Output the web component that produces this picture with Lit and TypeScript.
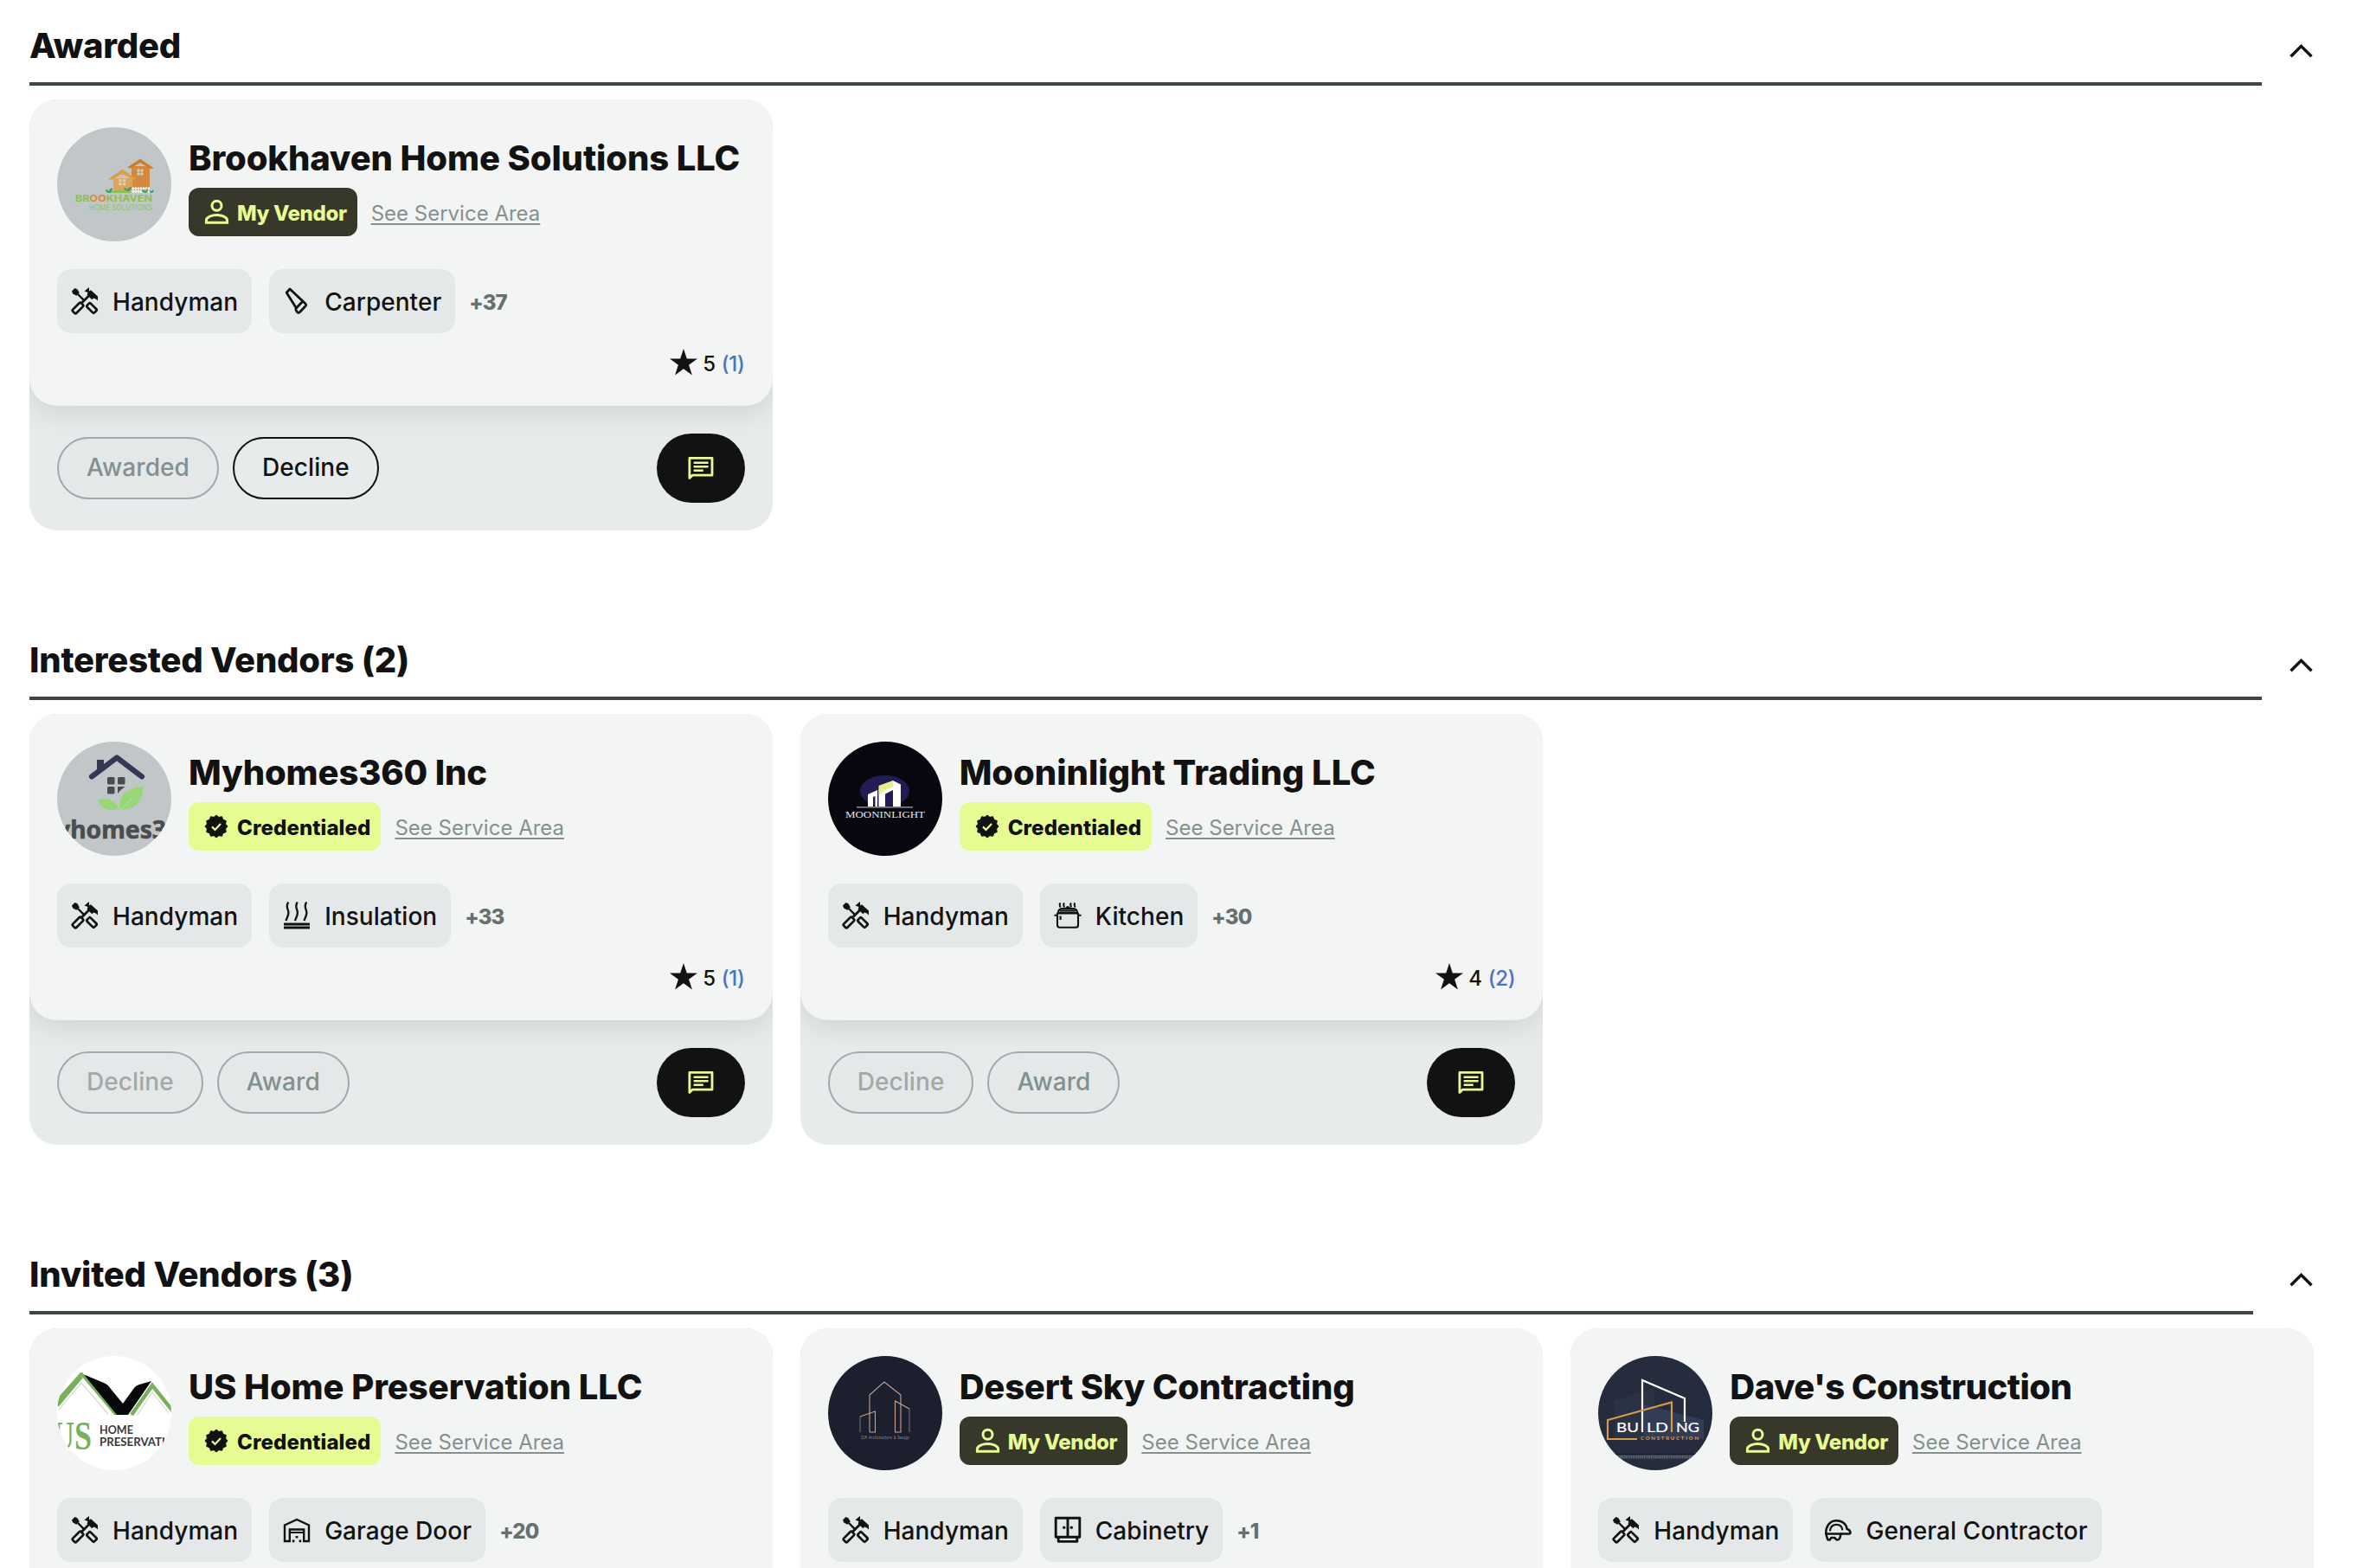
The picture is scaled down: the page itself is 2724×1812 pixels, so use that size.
import { LitElement, html, svg, css, nothing } from "lit";
import { customElement, property } from "lit/decorators.js";
import { classMap } from "lit/directives/class-map.js";
import { styleMap } from "lit/directives/style-map.js";

const icons: Record<string, unknown> = {
  handyman: svg`
    <path d="M1 4.5 4.5 1l3 1.2 2.3 4.2-3.4 3.4L2.2 7.5z" fill="currentColor"/>
    <path d="M8 8l6.6 6.6" stroke="currentColor" stroke-width="2.4"/>
    <path d="M21 9.5 12.5 18" stroke="currentColor" stroke-width="2.8"/>
    <path d="M15.5 4.6 19 1.6 21 0v4.4L23 3.2l8 7.2v5l-2.2-1.8-2.6-1.2-1.9 1.8-5.6-5.4.8-2.8z" fill="currentColor"/>
    <rect x="-6.8" y="-2.9" width="13.6" height="5.8" rx="1.6" transform="translate(8 24) rotate(-45)" fill="none" stroke="currentColor" stroke-width="2.7"/>
    <rect x="-6" y="-2.9" width="12" height="5.8" rx="1.6" transform="translate(24 24) rotate(45)" fill="none" stroke="currentColor" stroke-width="2.7"/>`,
  carpenter: svg`
    <g fill="none" stroke="currentColor" stroke-width="2.8" stroke-linejoin="round">
      <path d="M4.2 6.2 8 2l17.6 16.4q2 1.9.2 3.7l-6.4 6.6q-1.8 1.6-3.2-.4l-1.2-2.2q-.5-1.2.4-2.2z"/>
      <path d="M15.4 23.9 22.6 16.6"/>
    </g>`,
  insulation: svg`
    <g fill="none" stroke="currentColor" stroke-width="2.3">
      <path d="M6.2.5c-3.500 5.500 0 8 .2 12 .1 3.500-1.800 6.200-3 9.500"/>
      <path d="M16.7.5c-3.500 5.500 0 8 .2 12 .1 3.500-1.800 6.200-3 9.500"/>
      <path d="M27.2.5c-3.500 5.500 0 8 .2 12 .1 3.500-1.800 6.200-3 9.500"/>
    </g>
    <path d="M1 24.500h30v3H1zM1 28.600h30v2.900H1z" fill="currentColor"/>`,
  kitchen: svg`
    <g fill="none" stroke="currentColor" stroke-width="2.1" stroke-linejoin="round">
      <path d="M4 13.500h24V27q0 2.800-2.800 2.800H6.800Q4 29.800 4 27z"/>
      <path d="M.5 15.700h4M27.500 15.700h4"/>
      <path d="M5 12.800Q5 8.600 9 8h14q4 .6 4 4.800z"/>
      <path d="M7 10.400h18"/>
      <path d="M7.500 1.500q-1.800 2 .2 5M12 1.500q-1.800 2 .2 5M20 1.500q-1.800 2 .2 5M24.500 1.500q-1.800 2 .2 5M14 7.500q2-3 4 0" stroke-width="1.900"/>
      <path d="M7.600 16.500v4.500"/>
    </g>`,
  garage: svg`
    <g fill="none" stroke="currentColor" stroke-width="2.4">
      <path d="M2 29V10.500L16 4l14 6.500V29h-5.800V15.500H7.800V29z" stroke-linejoin="miter"/>
      <path d="M8 19h16" stroke-width="1.800"/>
      <path d="M10.800 28.900h2.600M18.600 28.900h2.600M14.600 24.300h2.800" stroke-width="2.600"/>
    </g>`,
  cabinet: svg`
    <g fill="none" stroke="currentColor" stroke-width="2.900" stroke-linejoin="round">
      <rect x="2.200" y="2.200" width="27.600" height="22"/>
      <path d="M16 2.200v22M5.200 25v4.400h21.600V25"/>
    </g>
    <circle cx="11.700" cy="13.200" r="1.700" fill="currentColor"/><circle cx="20.300" cy="13.200" r="1.700" fill="currentColor"/>`,
  helmet: svg`
    <g fill="none" stroke="currentColor" stroke-width="2.500" stroke-linejoin="round" stroke-linecap="round">
      <path d="M2.200 20.500C2.200 10.500 7.500 5.200 14.500 5.200c7 0 11.500 4.600 12 9.600 1.700.6 3.700 1.900 4 4.200.1 1-.4 1.500-1.400 1.500z"/>
      <path d="M7 16.500c.6-4.600 3.600-6.600 7.500-6.600 3.600 0 6.200 2.100 6.700 5.600" stroke-width="2.200"/>
      <path d="M2.500 20.500c.3 2.300.8 4 1.600 6q.4 1.200 1.600 1h1l1.600-2.500h4.200q1 2.500 3 2.500t3-2.600l1-4.400"/>
    </g>`,
};

const avatars: Record<string, unknown> = {
  brookhaven: svg`
    <rect width="132" height="132" fill="#c1c6c9"/>
    <path d="M86 45h21v28H86z" fill="#d3893b"/>
    <path d="M96 36.500 112 47.500l-4 .5-12-7-11 6.500-4-1z" fill="#d07b2c"/>
    <path d="M65 59h22v16H65z" fill="#dda65c"/>
    <path d="M75.500 48.500 92 60l-4 .8-12.500-7L63 60.800l-4-.8z" fill="#dc9d4e"/>
    <path d="M92.500 48.500h3v3h-3zM96.500 48.500h3v3h-3zM92.500 52.500h3v3h-3zM96.500 52.500h3v3h-3zM71.500 60h3v3h-3zM76 60h3v3h-3zM71.500 64h3v3h-3zM76 64h3v3h-3z" fill="#c9d4d8"/>
    <path d="M88 69v7M91 69v7M94 69v7M97 69v7M100 69v7M103 69v7M106 69v7M86 71h21M86 74h21" stroke="#f5efe6" stroke-width="1.400"/>
    <path d="M57 76q14-7 30 0z" fill="#8cc152"/>
    <path d="M60 76q-4-1-4-4 3 0 4 2 1-4 4-4 0 4-3 6zM82 74q-5-1-5-4 3 0 4 2 1-3 5-3 0 4-3 5zM102 76q-5-1-4-4 3 0 4 2 1-3 3-3 0 4-2 5zM109 76q-3-1-2-3l2 1 2-2q1 3-1 4z" fill="#3fa06c"/>
    <text x="21" y="86" textLength="89" lengthAdjust="spacingAndGlyphs" font-size="11" font-weight="700" fill="#8cc152">BR<tspan fill="#e08a38">OO</tspan>KHAVEN</text>
    <text x="37" y="95.500" textLength="73" lengthAdjust="spacingAndGlyphs" font-size="8.800" fill="#93c460">HOME SOLUTIONS</text>`,
  myhomes: svg`
    <rect width="132" height="132" fill="#c1c6c9"/>
    <path d="M46 21h8v7l-8 6z" fill="#343852"/>
    <path d="M40 40.500 69 18.500l29 22" fill="none" stroke="#343852" stroke-width="6.200" stroke-linecap="round" stroke-linejoin="round"/>
    <g fill="#484d50"><rect x="58" y="41" width="8.500" height="8.500" rx="1.500"/><rect x="70" y="41" width="8.500" height="8.500" rx="1.500"/><rect x="58" y="52" width="8.500" height="8.500" rx="1.500"/><path d="M70 52h8.500l-5 4-3.500 4z"/></g>
    <path d="M99 52c1 14-7 28-27 26-1-16 8-25 27-26z" fill="#97d775"/>
    <path d="M47 67c12-3 21 1 24 11-14 3-20-1-24-11z" fill="#97d775"/>
    <path d="M73 78q8-4 14-14" stroke="#b9dda9" stroke-width="1" fill="none"/>
    <text x="-1" y="112" textLength="127" lengthAdjust="spacingAndGlyphs" font-family="Noto Sans, Inter, sans-serif" font-size="29" font-weight="700" fill="#484d50" stroke="#484d50" stroke-width=".6">yhomes3</text>`,
  moon: svg`
    <rect width="132" height="132" fill="#08070f"/>
    <ellipse cx="65.500" cy="57" rx="28.500" ry="18" fill="#211d52"/>
    <path d="M46 75V61l11-5v19h-2.500V63L52 64v11zM75 45l9 4.500V75h-9V56l-9 4.500V75h-7.500V56z" fill="#fff"/>
    <path d="M58.500 51 75 45v7.500l-9.500 3.800-7 5.700z" fill="#e8ef8b"/>
    <path d="M33 75.800h65" stroke="#a9a9b5" stroke-width="1.200"/>
    <text x="20" y="88" textLength="92" lengthAdjust="spacingAndGlyphs" font-family="Liberation Serif, serif" font-size="9.500" fill="#e6e6ea">MOONINLIGHT</text>`,
  ushome: svg`
    <rect width="132" height="132" fill="#fff"/>
    <path d="M-2 58 28 23 66 68h5L29 19h-2L-6 56z" fill="#79b05c"/>
    <path d="M0 57 28 23.500" stroke="#79b05c" stroke-width="5"/>
    <path d="M31 21.500 54 31q5 2 8 7l14 17 13-18q2-3 6-4l14-4-27 39H69z" fill="#070809"/>
    <path d="M86 68 110 34l24 30" fill="none" stroke="#79b05c" stroke-width="4.500"/>
    <path d="M2 62 28 31l31 36M93 68l17-26 19 24" fill="none" stroke="#d5dbd3" stroke-width="1.200"/>
    <text x="-6" y="108" textLength="46" lengthAdjust="spacingAndGlyphs" font-family="Liberation Serif, serif" font-size="47" font-weight="700" fill="#79b05c">US</text>
    <text x="49" y="90" textLength="39" lengthAdjust="spacingAndGlyphs" font-family="Lato, sans-serif" font-size="14" font-weight="700" fill="#3a3a3c">HOME</text>
    <text x="49" y="103.500" textLength="76" lengthAdjust="spacingAndGlyphs" font-family="Lato, sans-serif" font-size="14" font-weight="700" fill="#3a3a3c">PRESERVATI</text>`,
  desert: svg`
    <rect width="132" height="132" fill="#1c1f2d"/>
    <g fill="none" stroke="#c9a393" stroke-width="1.100">
      <path d="M48 88V45l17-15 19 15v43h-6.500V52L94 61" />
      <path d="M48 88h6.500V64L37 70"/>
      <path d="M37 70v18M94 61v27" stroke="#7c6a6b"/>
    </g>
    <text x="38" y="95.500" textLength="56" lengthAdjust="spacingAndGlyphs" font-family="Liberation Mono, monospace" font-size="5" fill="#9a97a0">ILM Architecture &amp; Design</text>`,
  dave: svg`
    <rect width="132" height="132" fill="#252c3d"/>
    <path d="M19 52 65 36v60H19z" fill="#2a3245"/>
    <path d="M53 56 122 74v22H53z" fill="#323c56"/>
    <path d="M51 88V28l49 21v27" fill="none" stroke="#fff" stroke-width="2.200"/>
    <path d="M45 96H11V74l74-20.500V88" fill="none" stroke="#d99a45" stroke-width="2.200"/>
    <g font-family="Lato, sans-serif" font-size="14.500" fill="#fff" stroke="#fff" stroke-width=".2">
      <text x="21" y="88" textLength="26" lengthAdjust="spacingAndGlyphs">BU</text>
      <text x="56" y="88" textLength="25" lengthAdjust="spacingAndGlyphs">LD</text>
      <text x="90" y="88" textLength="27" lengthAdjust="spacingAndGlyphs">NG</text>
    </g>
    <text x="49" y="96.700" textLength="67" font-family="Lato, sans-serif" font-size="6" font-weight="700" fill="#d99a45">CONSTRUCTION</text>
    <path d="M0 113.500h132" stroke="#161b28" stroke-width="1"/>
    <path d="M0 116.500h132" stroke="#5d6473" stroke-width="4" stroke-dasharray="1.500 .6"/>`,
};

interface Vendor {
  name: string;
  tracking: number;
  avatar: string;
  mine: boolean;
  trades: [string, string][];
  more?: string;
  rating: string;
  reviews: string;
  actions: [string, string][];
}

const interestedActions: [string, string][] = [["Decline", "faint"], ["Award", "muted"]];

const sections: { title: string; vendors: Vendor[] }[] = [
  {
    title: "Awarded",
    vendors: [
      { name: "Brookhaven Home Solutions LLC", tracking: -0.12, avatar: "brookhaven", mine: true, trades: [["handyman", "Handyman"], ["carpenter", "Carpenter"]], more: "+37", rating: "5", reviews: "(1)", actions: [["Awarded", "muted"], ["Decline", "solid"]] },
    ],
  },
  {
    title: "Interested Vendors (2)",
    vendors: [
      { name: "Myhomes360 Inc", tracking: -0.15, avatar: "myhomes", mine: false, trades: [["handyman", "Handyman"], ["insulation", "Insulation"]], more: "+33", rating: "5", reviews: "(1)", actions: interestedActions },
      { name: "Mooninlight Trading LLC", tracking: -0.03, avatar: "moon", mine: false, trades: [["handyman", "Handyman"], ["kitchen", "Kitchen"]], more: "+30", rating: "4", reviews: "(2)", actions: interestedActions },
    ],
  },
  {
    title: "Invited Vendors (3)",
    vendors: [
      { name: "US Home Preservation LLC", tracking: -0.07, avatar: "ushome", mine: false, trades: [["handyman", "Handyman"], ["garage", "Garage Door"]], more: "+20", rating: "", reviews: "", actions: [] },
      { name: "Desert Sky Contracting", tracking: -0.22, avatar: "desert", mine: true, trades: [["handyman", "Handyman"], ["cabinet", "Cabinetry"]], more: "+1", rating: "", reviews: "", actions: [] },
      { name: "Dave's Construction", tracking: -0.53, avatar: "dave", mine: true, trades: [["handyman", "Handyman"], ["helmet", "General Contractor"]], rating: "", reviews: "", actions: [] },
    ],
  },
];

/* Twelve-lobed seal outline centred on (13, 13). */
const seal = Array.from({ length: 24 }, (_, i) => {
  const a = (i * Math.PI) / 12;
  const r = i % 2 ? 11 : 13;
  return `${(13 + r * Math.sin(a)).toFixed(2)},${(13 - r * Math.cos(a)).toFixed(2)}`;
}).join(" ");

@customElement("vendor-card")
class VendorCard extends LitElement {
  @property({ attribute: false }) vendor!: Vendor;

  static styles = css`
    :host { display: block; }
    .card { background: #e8ebeb; border-radius: 32px; overflow: hidden; }
    .top {
      height: 354px; box-sizing: border-box; padding: 32px; border-radius: 32px;
      background: #f3f5f4; box-shadow: 0 8px 32px rgba(0, 0, 0, 0.1);
      display: flex; flex-direction: column;
    }
    .head { display: flex; gap: 20px; }
    .avatar { width: 132px; height: 132px; border-radius: 50%; flex: none; display: block; }
    .who { padding-top: 12px; min-width: 0; }
    .name { font-size: 40px; line-height: 48px; font-weight: 800; white-space: nowrap; }
    .meta { display: flex; align-items: center; gap: 16px; margin-top: 10px; }
    .badge {
      height: 56px; box-sizing: border-box; padding: 2px 12px 0 16px; border-radius: 12px;
      display: flex; align-items: center; gap: 8px; background: #e7fb93; color: #121212;
      font-size: 24px; font-weight: 800; letter-spacing: 0.1px; white-space: nowrap;
    }
    .mine { background: #37382a; color: #e7fb93; letter-spacing: -0.35px; }
    .badge svg { width: 32px; height: 32px; flex: none; margin-top: -2px; }
    .link { font-size: 24px; color: #84918f; text-decoration: underline; text-decoration-thickness: 2px; text-underline-offset: 3px; padding-top: 2px; white-space: nowrap; }
    .trades { display: flex; align-items: center; gap: 20px; margin-top: 32px; height: 74px; }
    .chip {
      height: 74px; box-sizing: border-box; padding: 2px 16px 0; border-radius: 16px; background: #e4e8e8;
      display: flex; align-items: center; gap: 16px; font-size: 28px; font-weight: 500; letter-spacing: 0.04px; white-space: nowrap;
    }
    .chip svg { width: 32px; height: 32px; flex: none; margin-top: -2px; }
    .more { margin-left: -4px; font-size: 24px; font-weight: 800; letter-spacing: -0.9px; color: #66716f; padding-top: 2px; }
    .rating { display: flex; justify-content: flex-end; align-items: center; gap: 6px; height: 36px; margin-top: 18px; font-size: 24px; font-weight: 500; letter-spacing: -0.3px; }
    .rating svg { width: 32px; height: 31px; margin-top: -3px; }
    .reviews { color: #4b72c4; margin-left: 1px; }
    .foot { height: 144px; box-sizing: border-box; padding: 0 32px; display: flex; align-items: center; gap: 16px; }
    .btn {
      height: 72px; box-sizing: border-box; padding: 0 32px 2px; border-radius: 36px; border: 2px solid #121212;
      background: none; color: #121212; font: 500 28px Inter, "Liberation Sans", sans-serif; letter-spacing: 0.08px;
    }
    .muted { border-color: #9fabaa; color: #82908f; background: #e4e8e8; }
    .faint { border-color: #9fabaa; color: #9faaa9; background: #e4e8e8; }
    .chat { margin-left: auto; width: 102px; height: 80px; border: 0; border-radius: 40px; background: #121212; padding: 0; display: flex; align-items: center; justify-content: center; }
    .chat svg { width: 30px; height: 30px; }
  `;

  render() {
    const v = this.vendor;
    return html`
      <div class="card">
        <div class="top">
          <div class="head">
            <svg class="avatar" viewBox="0 0 132 132" font-family="Inter, sans-serif">${avatars[v.avatar]}</svg>
            <div class="who">
              <div class="name" style=${styleMap({ letterSpacing: `${v.tracking}px` })}>${v.name}</div>
              <div class="meta">
                <span class=${classMap({ badge: true, mine: v.mine })}>
                  ${v.mine
                    ? html`<svg viewBox="0 0 32 32" fill="none" stroke="currentColor" stroke-width="3"><circle cx="16.500" cy="8.700" r="5.500"/><path d="M4.400 28.200v-2.600c0-3.800 6.600-6 12.100-6s12.100 2.200 12.100 6v2.600z"/></svg>`
                    : html`<svg viewBox="-3 -3 32 32"><polygon points=${seal} fill="currentColor" stroke="currentColor" stroke-width="1" stroke-linejoin="round"/><path d="M8 13.400l3.500 3.500 6.500-7" fill="none" stroke="#e7fb93" stroke-width="2.200"/></svg>`}
                  ${v.mine ? "My Vendor" : "Credentialed"}
                </span>
                <span class="link">See Service Area</span>
              </div>
            </div>
          </div>
          <div class="trades">
            ${v.trades.map(([icon, label]) => html`<span class="chip"><svg viewBox="0 0 32 32">${icons[icon]}</svg>${label}</span>`)}
            ${v.more ? html`<span class="more">${v.more}</span>` : nothing}
          </div>
          ${v.rating
            ? html`<div class="rating">
                <svg viewBox="0 0 32 31"><path d="M16 0l3.800 11.600H32l-9.900 7.100L25.900 30.500 16 23.200 6.100 30.500l3.800-11.800L0 11.600h12.200z" fill="#121212"/></svg>
                <span>${v.rating}</span><span class="reviews">${v.reviews}</span>
              </div>`
            : nothing}
        </div>
        <div class="foot">
          ${v.actions.map(([label, tone]) => html`<button class="btn ${tone}">${label}</button>`)}
          ${v.actions.length
            ? html`<button class="chat"><svg viewBox="0 0 30 30" fill="none" stroke="#e7fb93" stroke-width="2.800"><path d="M1.900 26.500V3.400H28v19.800H5.200z" stroke-linejoin="round"/><path d="M6.600 8.700h17M6.600 13.200h17M6.600 17.700h11.200" stroke-width="2.600"/></svg></button>`
            : nothing}
        </div>
      </div>
    `;
  }
}

@customElement("app-root")
class AppRoot extends LitElement {
  static styles = css`
    :host {
      display: block; height: 1812px; overflow: hidden; background: #fff; color: #121212;
      font-family: Inter, "Liberation Sans", sans-serif;
    }
    section { height: 710px; box-sizing: border-box; padding: 0 50px 0 34px; }
    header { height: 99px; display: flex; justify-content: space-between; }
    h2 {
      flex: 1; margin: 0 33px 0 0; padding-top: 29px; box-sizing: border-box; border-bottom: 4px solid #3e4547;
      font-size: 40px; line-height: 48px; font-weight: 800; letter-spacing: -0.22px;
    }
    .full h2 { margin-right: 43px; }
    .chevron { width: 27px; height: 17px; margin: 50px 1px 0 -1px; }
    .grid { display: grid; grid-template-columns: repeat(3, 1fr); gap: 32px; margin-top: 16px; }
  `;

  render() {
    return sections.map(
      (s) => html`
        <section class=${classMap({ full: s.vendors.length === 3 })}>
          <header>
            <h2>${s.title}</h2>
            <svg class="chevron" viewBox="0 0 27 17"><path d="M1.500 15.300 13.500 3.300l12 12" fill="none" stroke="#121212" stroke-width="3.400"/></svg>
          </header>
          <div class="grid">${s.vendors.map((v) => html`<vendor-card .vendor=${v}></vendor-card>`)}</div>
        </section>
      `,
    );
  }
}
